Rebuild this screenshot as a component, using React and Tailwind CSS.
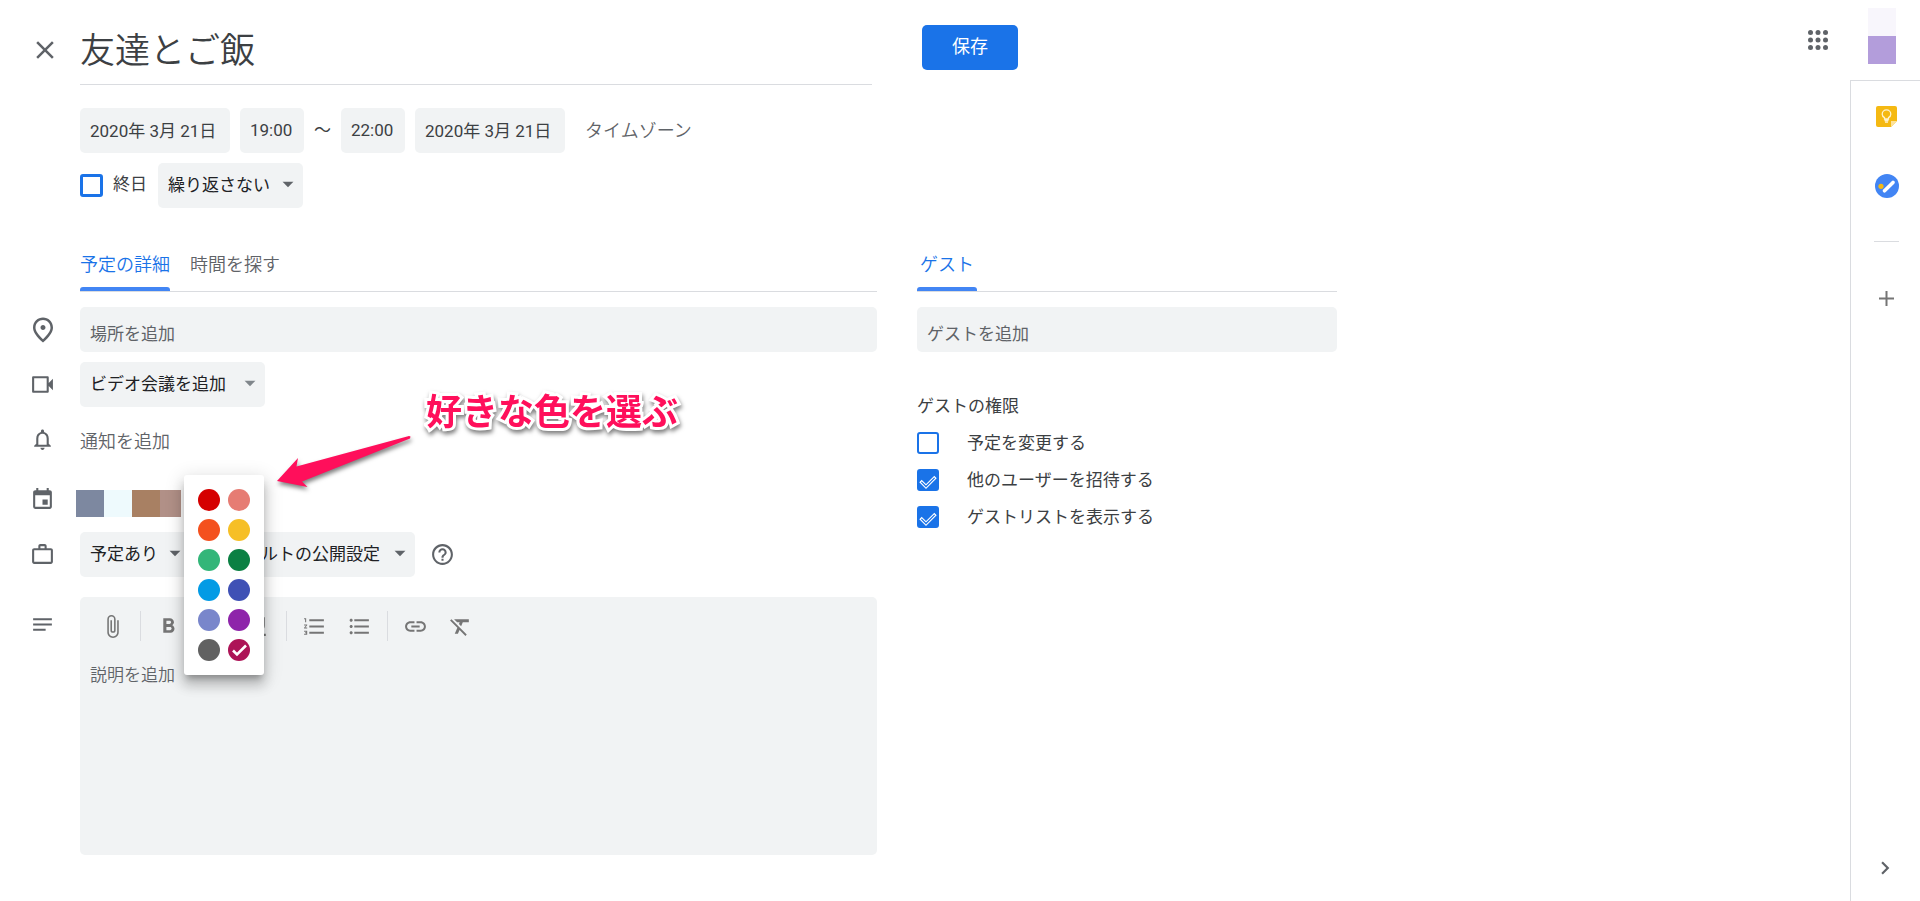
import React, { useState } from "react";
import {
  MdArrowDropDown,
  MdAttachFile,
  MdChevronRight,
  MdClose,
  MdEvent,
  MdFormatBold,
  MdFormatClear,
  MdFormatItalic,
  MdFormatListBulleted,
  MdFormatListNumbered,
  MdFormatUnderlined,
  MdHelpOutline,
  MdLink,
  MdNotes,
  MdNotificationsNone,
  MdOutlinePlace,
  MdWorkOutline,
} from "react-icons/md";

const COLORS = [
  { name: "トマト", className: "bg-[#d50000]" },
  { name: "フラミンゴ", className: "bg-[#e67c73]" },
  { name: "ミカン", className: "bg-[#f4511e]" },
  { name: "バナナ", className: "bg-[#f6bf26]" },
  { name: "セージ", className: "bg-[#33b679]" },
  { name: "バジル", className: "bg-[#0b8043]" },
  { name: "ピーコック", className: "bg-[#039be5]" },
  { name: "ブルーベリー", className: "bg-[#3f51b5]" },
  { name: "ラベンダー", className: "bg-[#7986cb]" },
  { name: "ブドウ", className: "bg-[#8e24aa]" },
  { name: "グラファイト", className: "bg-[#616161]" },
  { name: "ビーツ", className: "bg-[#ad1457]" },
];

function Row({ icon, className = "", children }) {
  return (
    <div className={`flex ${className}`}>
      <div className="flex h-[45px] w-[85px] shrink-0 items-center justify-center text-[25px] text-[#5f6368]">
        {icon}
      </div>
      <div className="-ml-[5px] min-w-0 flex-1">{children}</div>
    </div>
  );
}

function Dropdown({ label, value, className = "", arrowClassName = "text-[#5f6368]" }) {
  return (
    <div className={`relative h-[45px] shrink-0 ${className}`}>
      <select
        aria-label={label}
        className="h-full w-full appearance-none rounded-[5px] bg-[#f1f3f4] pr-7 pl-[10px] text-[17px] text-[#202124]"
      >
        <option>{value}</option>
      </select>
      <MdArrowDropDown
        className={`pointer-events-none absolute top-2 right-[2px] text-[26px] ${arrowClassName}`}
      />
    </div>
  );
}

function TextField({ label, value, className }) {
  return (
    <input
      aria-label={label}
      defaultValue={value}
      className={`h-[45px] rounded-[5px] bg-[#f1f3f4] px-[10px] pb-0.5 text-[17px] text-[#3c4043] ${className}`}
    />
  );
}

function VideocamIcon() {
  return (
    <svg viewBox="0 0 24 24" className="size-[25px]" fill="currentColor">
      <path d="M18 10.500V5.200c0-.7-.5-1.200-1.200-1.200H3.200C2.500 4 2 4.500 2 5.200v13.600c0 .7.5 1.200 1.200 1.200h13.600c.7 0 1.200-.5 1.200-1.200v-5.300l4 4v-11l-4 4zM16 18H4V6h12v12z" />
    </svg>
  );
}

function KeepIcon() {
  return (
    <svg viewBox="0 0 21 21" className="size-[21px]">
      <path d="M2 0h17a2 2 0 0 1 2 2v13l-6 6H2a2 2 0 0 1-2-2V2a2 2 0 0 1 2-2z" fill="#f5b912" />
      <path d="M15 21v-6h6z" fill="#fce29a" />
      <path
        d="M8.500 13v-1.400C7 10.800 6.200 9.600 6.200 8.200a4.300 4.300 0 0 1 8.600 0c0 1.400-.8 2.600-2.300 3.400V13zM8.500 14.500h4M9 16.200h3"
        fill="none"
        stroke="#fff3cf"
        strokeWidth="1.300"
      />
    </svg>
  );
}

function TasksIcon() {
  return (
    <svg viewBox="0 0 24 24" className="size-6">
      <circle cx="12" cy="12" r="12" fill="#4285f4" />
      <circle cx="6" cy="12.300" r="2.600" fill="#f4b912" />
      <path d="M9.500 16.800 18 8.500" stroke="#fff" strokeWidth="3.600" strokeLinecap="round" />
    </svg>
  );
}

function GuestOption({ label, defaultChecked }) {
  return (
    <label className="flex items-center gap-7 text-[17px] leading-[22px]">
      <span className="relative size-[22px] shrink-0">
        <input
          type="checkbox"
          defaultChecked={defaultChecked}
          className="peer block size-full appearance-none rounded-[3px] border-2 border-[#1a73e8] checked:bg-[#1a73e8]"
        />
        <svg
          viewBox="0 0 22 22"
          className="pointer-events-none absolute inset-0 hidden peer-checked:block"
          fill="none"
        >
          <path d="M3.500 12l5.500 5.500L18.500 8" stroke="#fff" strokeWidth="3.400" />
          <path d="M4.400 12.900L9 17.500L17.600 8.900" stroke="#1a73e8" strokeWidth="1.300" />
        </svg>
      </span>
      {label}
    </label>
  );
}

function ToolButton({ label, children }) {
  return (
    <button type="button" aria-label={label} className="flex size-[25px] items-center justify-center text-[25px]">
      {children}
    </button>
  );
}

function ColorPicker() {
  const [selected, setSelected] = useState("ビーツ");
  return (
    <div className="absolute top-0 left-[104px] z-10 grid grid-cols-2 gap-2 rounded-[3px] bg-white p-[14px] shadow-[0_10px_12px_1px_rgba(0,0,0,0.16),0_4px_18px_3px_rgba(0,0,0,0.12),0_6px_6px_-3px_rgba(0,0,0,0.25)]">
      {COLORS.map((c) => (
        <button
          key={c.name}
          type="button"
          aria-label={c.name}
          onClick={() => setSelected(c.name)}
          className={`size-[22px] rounded-full ${c.className}`}
        >
          {selected === c.name && (
            <svg viewBox="0 0 22 22" className="size-full" fill="none" stroke="#fff" strokeWidth="2.600">
              <path d="M5 11.500l4 4 9-9" />
            </svg>
          )}
        </button>
      ))}
    </div>
  );
}

function Annotation() {
  return (
    <div className="pointer-events-none absolute top-[-88px] left-[196px] z-20 flex items-start">
      <svg
        viewBox="0 0 136 56"
        className="mt-[45px] h-14 w-[136px] shrink-0 overflow-visible drop-shadow-[1px_3px_2px_rgba(0,0,0,0.5)]"
      >
        <path d="M1 49 22 26 20.500 34.500 133 4 134.500 4.500 134 6.500 26 49.500 31.500 55z" fill="#ff0f5b" />
      </svg>
      <p className="ml-[14px] text-[36px] leading-[52px] font-bold whitespace-nowrap text-[#ff0f5b] [paint-order:stroke_fill] [-webkit-text-stroke:6px_#fff] drop-shadow-[1px_3px_2px_rgba(0,0,0,0.5)]">
        好きな色を選ぶ
      </p>
    </div>
  );
}

export default function App() {
  return (
    <div className="flex min-h-screen bg-white font-['Roboto','Noto_Sans_CJK_JP',sans-serif] text-[17px] text-[#3c4043]">
      <main className="min-w-0 flex-1">
        <header className="flex pt-[25px]">
          <div className="flex w-full max-w-[872px]">
            <div className="w-20 shrink-0 pt-[10px] pl-[30px]">
              <button type="button" aria-label="閉じる" className="block text-[30px] text-[#5f6368]">
                <MdClose />
              </button>
            </div>
            <input
              aria-label="タイトル"
              defaultValue="友達とご飯"
              className="h-[60px] min-w-0 flex-1 border-b border-[#dadce0] pb-[14px] text-[35px] font-[350] text-[#3c4043]"
            />
          </div>
          <button
            type="button"
            className="ml-[50px] h-[45px] w-24 shrink-0 rounded-[5px] bg-[#1a73e8] pb-0.5 text-[18px] text-white"
          >
            保存
          </button>
        </header>

        <section className="pl-20">
          <div className="mt-[23px] flex items-center">
            <TextField label="開始日" value="2020年 3月 21日" className="w-[150px]" />
            <TextField label="開始時刻" value="19:00" className="ml-[10px] w-16" />
            <span className="w-[37px] text-center">～</span>
            <TextField label="終了時刻" value="22:00" className="w-16" />
            <TextField label="終了日" value="2020年 3月 21日" className="ml-[10px] w-[150px]" />
            <button type="button" className="ml-5 text-[18px] font-[350] text-[#5f6368]">
              タイムゾーン
            </button>
          </div>
          <div className="mt-[10px] flex items-center">
            <label className="flex items-center gap-[10px]">
              <input
                type="checkbox"
                className="size-[23px] appearance-none rounded-[3px] border-3 border-[#1a73e8] checked:bg-[#1a73e8]"
              />
              <span className="pb-0.5">終日</span>
            </label>
            <Dropdown label="繰り返し" value="繰り返さない" className="ml-[11px] w-[145px]" />
          </div>
        </section>

        <div className="mt-10 flex gap-10 pr-6">
          <section className="w-full max-w-[877px]">
            <div className="ml-20 flex gap-5 border-b border-[#dadce0] text-[18px] font-[350]">
              <button type="button" className="flex h-[43px] flex-col justify-between text-[#1a73e8]">
                <span className="leading-[34px]">予定の詳細</span>
                <span className="h-1 w-full rounded-t-[3px] bg-[#4285f4]" />
              </button>
              <button type="button" className="flex h-[43px] flex-col text-[#5f6368]">
                <span className="leading-[34px]">時間を探す</span>
              </button>
            </div>

            <Row className="mt-[15px]" icon={<MdOutlinePlace className="text-[30px]" />}>
              <input
                aria-label="場所"
                placeholder="場所を追加"
                className="h-[45px] w-full rounded-[5px] bg-[#f1f3f4] px-[10px] pt-2 placeholder:text-[#5f6368]"
              />
            </Row>

            <Row className="mt-[10px]" icon={<VideocamIcon />}>
              <Dropdown
                label="ビデオ会議"
                value="ビデオ会議を追加"
                className="w-[185px]"
                arrowClassName="text-[#80868b]"
              />
            </Row>

            <Row className="mt-[10px]" icon={<MdNotificationsNone />}>
              <button type="button" className="h-[45px] pt-[3px] text-[18px] font-[350] text-[#5f6368]">
                通知を追加
              </button>
            </Row>

            <Row className="mt-[13px]" icon={<MdEvent className="mt-1" />}>
              <div className="relative">
                <button type="button" aria-label="カレンダー" className="-ml-1 flex h-[42px] items-end">
                  <span className="h-[27px] w-7 bg-[#7d88a0]" />
                  <span className="h-[27px] w-7 bg-[#eefafd]" />
                  <span className="h-[27px] w-7 bg-[#a88063]" />
                  <span className="h-[27px] w-[21px] bg-[#b19087]" />
                </button>
                <ColorPicker />
                <Annotation />
              </div>
            </Row>

            <Row className="mt-3" icon={<MdWorkOutline />}>
              <div className="flex items-center gap-[10px]">
                <Dropdown label="予定の状態" value="予定あり" className="w-[110px]" />
                <Dropdown label="公開設定" value="デフォルトの公開設定" className="w-[215px]" />
                <button type="button" aria-label="ヘルプ" className="ml-[5px] text-[25px] text-[#5f6368]">
                  <MdHelpOutline />
                </button>
              </div>
            </Row>

            <Row className="mt-5" icon={<MdNotes className="mt-[10px]" />}>
              <div className="flex h-[258px] flex-col rounded-[5px] bg-[#f1f3f4] pt-[14px]">
                <div className="flex h-[30px] items-center pl-[20px] text-[#757575]">
                  <ToolButton label="添付">
                    <MdAttachFile />
                  </ToolButton>
                  <span className="mx-[15px] h-full w-px bg-[#dadce0]" />
                  <div className="flex gap-5">
                    <ToolButton label="太字">
                      <MdFormatBold />
                    </ToolButton>
                    <ToolButton label="斜体">
                      <MdFormatItalic />
                    </ToolButton>
                    <ToolButton label="下線">
                      <MdFormatUnderlined />
                    </ToolButton>
                  </div>
                  <span className="mx-[15px] h-full w-px bg-[#dadce0]" />
                  <div className="flex gap-5">
                    <ToolButton label="番号付きリスト">
                      <MdFormatListNumbered />
                    </ToolButton>
                    <ToolButton label="箇条書き">
                      <MdFormatListBulleted />
                    </ToolButton>
                  </div>
                  <span className="mx-[15px] h-full w-px bg-[#dadce0]" />
                  <div className="flex gap-5">
                    <ToolButton label="リンク">
                      <MdLink />
                    </ToolButton>
                    <ToolButton label="書式をクリア">
                      <MdFormatClear />
                    </ToolButton>
                  </div>
                </div>
                <textarea
                  aria-label="説明"
                  placeholder="説明を追加"
                  className="mt-5 block w-full flex-1 resize-none px-[10px] leading-7 font-[350] placeholder:text-[#5f6368]"
                />
              </div>
            </Row>
          </section>

          <section className="w-full max-w-[420px]">
            <div className="flex border-b border-[#dadce0] text-[18px] font-[350]">
              <button type="button" className="flex h-[43px] w-[60px] flex-col justify-between text-[#1a73e8]">
                <span className="w-full text-center leading-[34px]">ゲスト</span>
                <span className="h-1 w-full rounded-t-[3px] bg-[#4285f4]" />
              </button>
            </div>
            <input
              aria-label="ゲスト"
              placeholder="ゲストを追加"
              className="mt-[15px] block h-[45px] w-full rounded-[5px] bg-[#f1f3f4] px-[10px] pt-2 placeholder:text-[#5f6368]"
            />
            <h2 className="mt-[41px] leading-[26px]">ゲストの権限</h2>
            <div className="mt-[13px] flex flex-col gap-[15px]">
              <GuestOption label="予定を変更する" />
              <GuestOption label="他のユーザーを招待する" defaultChecked />
              <GuestOption label="ゲストリストを表示する" defaultChecked />
            </div>
          </section>
        </div>
      </main>

      <aside className="flex shrink-0 flex-col items-end">
        <div className="flex h-20 items-start pr-6">
          <button type="button" aria-label="アプリ" className="mt-[25px] mr-[35px] text-[#5f6368]">
            <svg viewBox="0 0 30 30" className="size-[30px]" fill="currentColor">
              {[7.5, 15, 22.5].map((y) =>
                [7.5, 15, 22.5].map((x) => <circle key={`${x}-${y}`} cx={x} cy={y} r="2.500" />)
              )}
            </svg>
          </button>
          <button type="button" aria-label="アカウント" className="mt-2 block">
            <span className="block size-7 bg-[#f8f6fc]" />
            <span className="block size-7 bg-[#b39ddb]" />
          </button>
        </div>
        <div className="flex w-[70px] flex-1 flex-col items-center border-t border-l border-[#dadce0] pt-[25px] pb-5 pl-0.5">
          <button type="button" aria-label="Keep">
            <KeepIcon />
          </button>
          <button type="button" aria-label="ToDo リスト" className="mt-[47px]">
            <TasksIcon />
          </button>
          <span className="mt-[43px] h-px w-[25px] bg-[#dadce0]" />
          <button type="button" aria-label="アドオンを取得" className="mt-[49px]">
            <svg viewBox="0 0 15 15" className="size-[15px]" stroke="#757575" strokeWidth="2">
              <path d="M7.500 0v15M0 7.500h15" />
            </svg>
          </button>
          <button type="button" aria-label="サイドパネルを非表示" className="mt-auto mr-1 text-[26px] text-[#5f6368]">
            <MdChevronRight />
          </button>
        </div>
      </aside>
    </div>
  );
}
